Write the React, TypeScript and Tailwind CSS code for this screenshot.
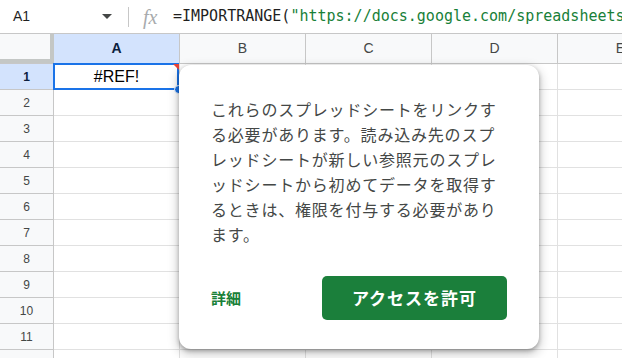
import React from 'react';

const cols = ['A', 'B', 'C', 'D', 'E'];
const rows = [1, 2, 3, 4, 5, 6, 7, 8, 9, 10, 11, 12];

const lines = [
  'これらのスプレッドシートをリンクす',
  'る必要があります。読み込み先のスプ',
  'レッドシートが新しい参照元のスプレ',
  'ッドシートから初めてデータを取得す',
  'るときは、権限を付与する必要があり',
  'ます。',
];

export default function App() {
  return (
    <div className="relative w-[622px] h-[358px] overflow-hidden bg-white font-['Liberation_Sans',Arial,sans-serif]">
      {/* Formula bar */}
      <div className="flex items-center h-[34px] border-b border-[#c7c7c7] overflow-hidden">
        <div className="flex shrink-0 items-center w-[128px] pl-[13px] pr-[16px] justify-between">
          <span className="text-[14px] text-[#1f1f1f]">A1</span>
          <svg width="10" height="5" viewBox="0 0 10 5">
            <path d="M0 0h10L5 5z" fill="#444746" />
          </svg>
        </div>
        <div className="w-px h-[20px] shrink-0 bg-[#c7c7c7]" />
        <span className="ml-[14px] w-[30px] shrink-0 font-['Liberation_Serif',serif] italic text-[20px] text-[#a8abad] leading-none">fx</span>
        <span className="whitespace-nowrap shrink-0 font-['DejaVu_Sans_Mono',monospace] text-[15px] text-[#1f1f1f]">
          =IMPORTRANGE(<span className="text-[#188038]">"https://docs.google.com/spreadsheets/d/</span>
        </span>
      </div>

      {/* Column headers */}
      <div className="flex h-[30px] bg-[#f8f9fa] border-b border-[#c7c7c7]">
        <div className="w-[54px] shrink-0 border-r-[4px] border-b-[4px] border-[#c4c7c5] bg-[#f8f9fa]" />
        {cols.map((c) => (
          <div
            key={c}
            className={`w-[126px] shrink-0 flex items-center justify-center border-r border-[#c7c7c7] text-[14px] ${
              c === 'A' ? 'bg-[#d3e3fd] font-bold text-[#0b1f3f]' : 'text-[#444746]'
            }`}
          >
            {c}
          </div>
        ))}
      </div>

      {/* Rows */}
      {rows.map((r) => (
        <div key={r} className="flex h-[26px]">
          <div
            className={`w-[54px] shrink-0 flex items-center justify-center border-r border-b border-[#c7c7c7] text-[12px] ${
              r === 1 ? 'bg-[#d3e3fd] font-bold text-[#0b1f3f]' : 'bg-[#f8f9fa] text-[#444746]'
            }`}
          >
            {r}
          </div>
          {cols.map((c) => (
            <div
              key={c}
              className="relative w-[126px] shrink-0 flex items-center justify-center border-r border-b border-[#e1e1e1] text-[16px] text-black"
            >
              {r === 1 && c === 'A' && (
                <>
                  #REF!
                  <div className="absolute -left-px -top-px w-[126px] h-[27px] border-2 border-[#1a73e8]" />
                  <div className="absolute right-0 top-0 w-0 h-0 border-l-[6px] border-l-transparent border-t-[6px] border-t-[#ea4335]" />
                  <div className="absolute -right-[4px] -bottom-[5px] w-[9px] h-[9px] rounded-full bg-[#1a73e8] border border-white" />
                </>
              )}
            </div>
          ))}
        </div>
      ))}

      {/* Permission dialog */}
      <div className="absolute left-[179px] top-[65px] w-[360px] h-[284px] bg-white rounded-[12px] shadow-[0_2px_4px_rgba(0,0,0,0.3),0_4px_10px_3px_rgba(0,0,0,0.15)] px-[32px] pt-[32px] pb-[29px] flex flex-col font-['Noto_Sans_CJK_JP','Noto_Sans',sans-serif]">
        <div className="text-[16px] leading-[25px] tracking-[0.8px] text-[#444746] whitespace-nowrap">
          {lines.map((l) => (
            <div key={l}>{l}</div>
          ))}
        </div>
        <div className="mt-auto flex items-center justify-between">
          <span className="text-[15px] font-bold text-[#188038]">詳細</span>
          <button className="w-[185px] h-[44px] rounded-[5px] bg-[#1b7f3b] text-white text-[17px] font-bold tracking-[1px]">
            アクセスを許可
          </button>
        </div>
      </div>
    </div>
  );
}
